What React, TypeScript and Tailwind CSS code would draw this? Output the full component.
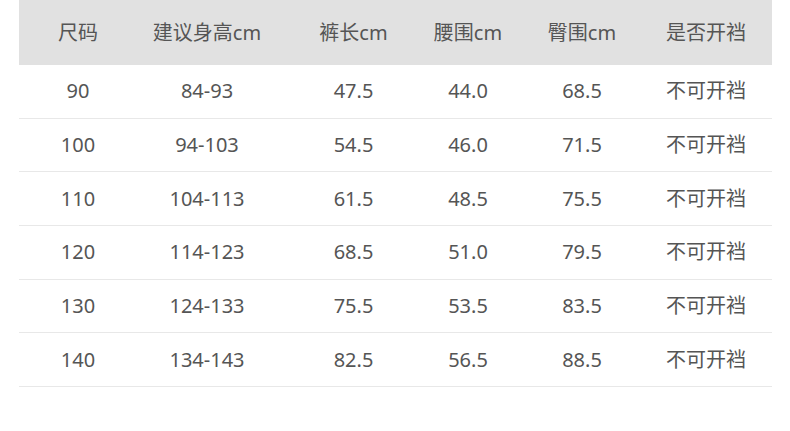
const HEAD = ["尺码", "建议身高cm", "裤长cm", "腰围cm", "臀围cm", "是否开裆"];

const ROWS = [
  ["90", "84-93", "47.5", "44.0", "68.5", "不可开裆"],
  ["100", "94-103", "54.5", "46.0", "71.5", "不可开裆"],
  ["110", "104-113", "61.5", "48.5", "75.5", "不可开裆"],
  ["120", "114-123", "68.5", "51.0", "79.5", "不可开裆"],
  ["130", "124-133", "75.5", "53.5", "83.5", "不可开裆"],
  ["140", "134-143", "82.5", "56.5", "88.5", "不可开裆"],
];

// column widths picked so each text centre lands where the reference has it
const cols = "grid grid-cols-[118px_140px_153px_76px_152px_96px] items-center";

export default function App() {
  return (
    <div className="h-[431px] w-[790px] bg-white font-['Noto_Sans','Noto_Sans_CJK_SC',sans-serif] text-[20px] text-[#555555]">
      <div className="ml-[19px] w-[753px]">
        <div className={`${cols} h-[65px] bg-[#e1e1e1]`}>
          {HEAD.map((h) => (
            <div key={h} className="whitespace-nowrap text-center leading-none">
              {h}
            </div>
          ))}
        </div>
        {ROWS.map((r) => (
          <div key={r[0]} className={`${cols} h-[53.67px] border-b border-[#e8e8e8]`}>
            {r.map((c, i) => (
              <div key={i} className="whitespace-nowrap text-center leading-none">
                {c}
              </div>
            ))}
          </div>
        ))}
      </div>
    </div>
  );
}
